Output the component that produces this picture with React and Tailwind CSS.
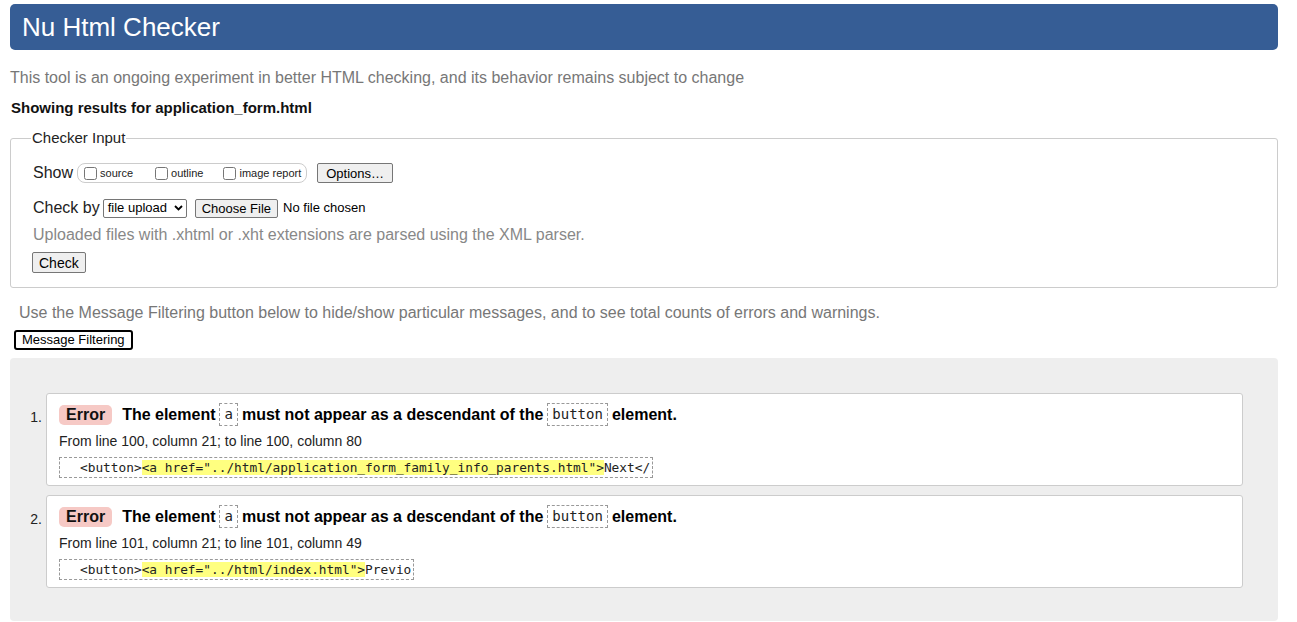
import React from 'react';

const mono = { fontFamily: '"DejaVu Sans Mono", "Liberation Mono", monospace' };

const messages = [
    {
        n: 1,
        loc: 'From line 100, column 21; to line 100, column 80',
        hl: '<a href="../html/application_form_family_info_parents.html">',
        rest: 'Next</',
    },
    {
        n: 2,
        loc: 'From line 101, column 21; to line 101, column 49',
        hl: '<a href="../html/index.html">',
        rest: 'Previo',
    },
];

const Code = ({ children }) => (
    <code className="inline-block border border-dashed border-[#999] px-[4px] text-[14px] font-normal leading-[21px] text-[#222] font-['DejaVu_Sans_Mono','Liberation_Mono',monospace]">
        {children}
    </code>
);

const Message = ({ m }) => (
    <div className="flex">
        <div className="w-[36px] pr-[4px] pt-[14px] text-right text-[14px] text-[#222]">{m.n}.</div>
        <div className="flex-1 bg-white border border-[#ccc] rounded-[3px] px-[12px] pt-[9px] pb-[6px]">
            <div className="flex items-center text-[16px] font-bold text-black leading-[22px]">
                <span className="bg-[#f6c9c5] rounded-[5px] px-[7px] leading-[20px] text-[#111]">Error</span>
                <span className="ml-[10px]">The element</span>
                <span className="ml-[4px]"><Code>a</Code></span>
                <span className="ml-[4px]">must not appear as a descendant of the</span>
                <span className="ml-[4px]"><Code>button</Code></span>
                <span className="ml-[4px]">element.</span>
            </div>
            <div className="mt-[6px] text-[14px] text-[#222] leading-[18px]">{m.loc}</div>
            <div className="mt-[5px]">
                <code
                    style={mono}
                    className="inline-block border border-dashed border-[#999] pl-[20px] pr-[2px] text-[12.8px] leading-[19px] text-[#222] whitespace-pre"
                >
                    {'<button>'}
                    <span className="bg-[#ffff80]">{m.hl}</span>
                    {m.rest}
                </code>
            </div>
        </div>
    </div>
);

export default function App() {
    return (
        <div className="min-h-screen bg-white pl-[10px] pr-[19px] pt-[4px] pb-[1px] text-[#222] font-['Liberation_Sans',Arial,sans-serif]">
            <header className="h-[46px] bg-[#365d95] rounded-[5px] flex items-center px-[12px]">
                <h1 className="text-[26px] text-white leading-none">Nu Html Checker</h1>
            </header>

            <p className="mt-[18px] text-[16px] leading-[20px] text-[#777]">
                This tool is an ongoing experiment in better HTML checking, and its behavior remains subject to change
            </p>
            <p className="mt-[10px] ml-[1px] text-[15px] font-bold leading-[20px] text-[#111]">
                Showing results for application_form.html
            </p>

            <fieldset className="mt-[11px] border border-[#ccc] rounded-[3px] pl-[22px] pr-[10px] pb-[12px]">
                <legend className="ml-[-2px] px-[1px] text-[15px] leading-[18px] text-[#222]">Checker Input</legend>
                <div className="mt-[15px] flex items-center h-[22px]">
                    <span className="text-[16px] text-[#222]">Show</span>
                    <div className="ml-[4px] flex items-center h-[20px] border border-[#ccc] rounded-[8px] pl-[6px] pr-[5px] text-[11px] text-[#222]">
                        <label className="flex items-center">
                            <input type="checkbox" className="w-[13px] h-[13px] m-0 mr-[3px]" />
                            source
                        </label>
                        <label className="flex items-center ml-[22px]">
                            <input type="checkbox" className="w-[13px] h-[13px] m-0 mr-[3px]" />
                            outline
                        </label>
                        <label className="flex items-center ml-[20px]">
                            <input type="checkbox" className="w-[13px] h-[13px] m-0 mr-[3px]" />
                            image report
                        </label>
                    </div>
                    <button className="ml-[10px] h-[20px] px-[8px] text-[13px] bg-[#efefef] border border-[#767676] rounded-[2px] text-black leading-none">
                        Options…
                    </button>
                </div>
                <div className="mt-[13px] flex items-center h-[22px]">
                    <span className="text-[16px] text-[#222]">Check by</span>
                    <div className="ml-[3px] h-[19px] w-[84px] flex items-center justify-between border border-[#767676] rounded-[2px] pl-[4px] pr-[3px] text-[13px] text-black bg-white">
                        <span>file upload</span>
                        <svg width="9" height="6" viewBox="0 0 9 6"><path d="M1 1l3.5 3.5L8 1" fill="none" stroke="#000" strokeWidth="1.8" /></svg>
                    </div>
                    <button className="ml-[8px] h-[19px] px-[6px] text-[13px] bg-[#efefef] border border-[#767676] rounded-[2px] text-black leading-none">
                        Choose File
                    </button>
                    <span className="ml-[5px] text-[13px] text-black">No file chosen</span>
                </div>
                <p className="mt-[6px] text-[16px] leading-[20px] text-[#888]">
                    Uploaded files with .xhtml or .xht extensions are parsed using the XML parser.
                </p>
                <button className="mt-[7px] -ml-[1px] h-[21px] px-[6px] text-[14px] bg-[#efefef] border border-[#767676] rounded-[2px] text-black leading-none">
                    Check
                </button>
            </fieldset>

            <p className="mt-[15px] ml-[9px] text-[16px] leading-[20px] text-[#777]">
                Use the Message Filtering button below to hide/show particular messages, and to see total counts of errors and warnings.
            </p>
            <button className="mt-[7px] ml-[4px] h-[20px] px-[6px] text-[13px] bg-white border-2 border-black rounded-[3px] text-black leading-none">
                Message Filtering
            </button>

            <div className="mt-[7px] bg-[#eee] rounded-[4px] pl-0 pr-[35px] pt-[35px] pb-[33px] flex flex-col gap-[9px]">
                {messages.map(m => (
                    <Message key={m.n} m={m} />
                ))}
            </div>
        </div>
    );
}
